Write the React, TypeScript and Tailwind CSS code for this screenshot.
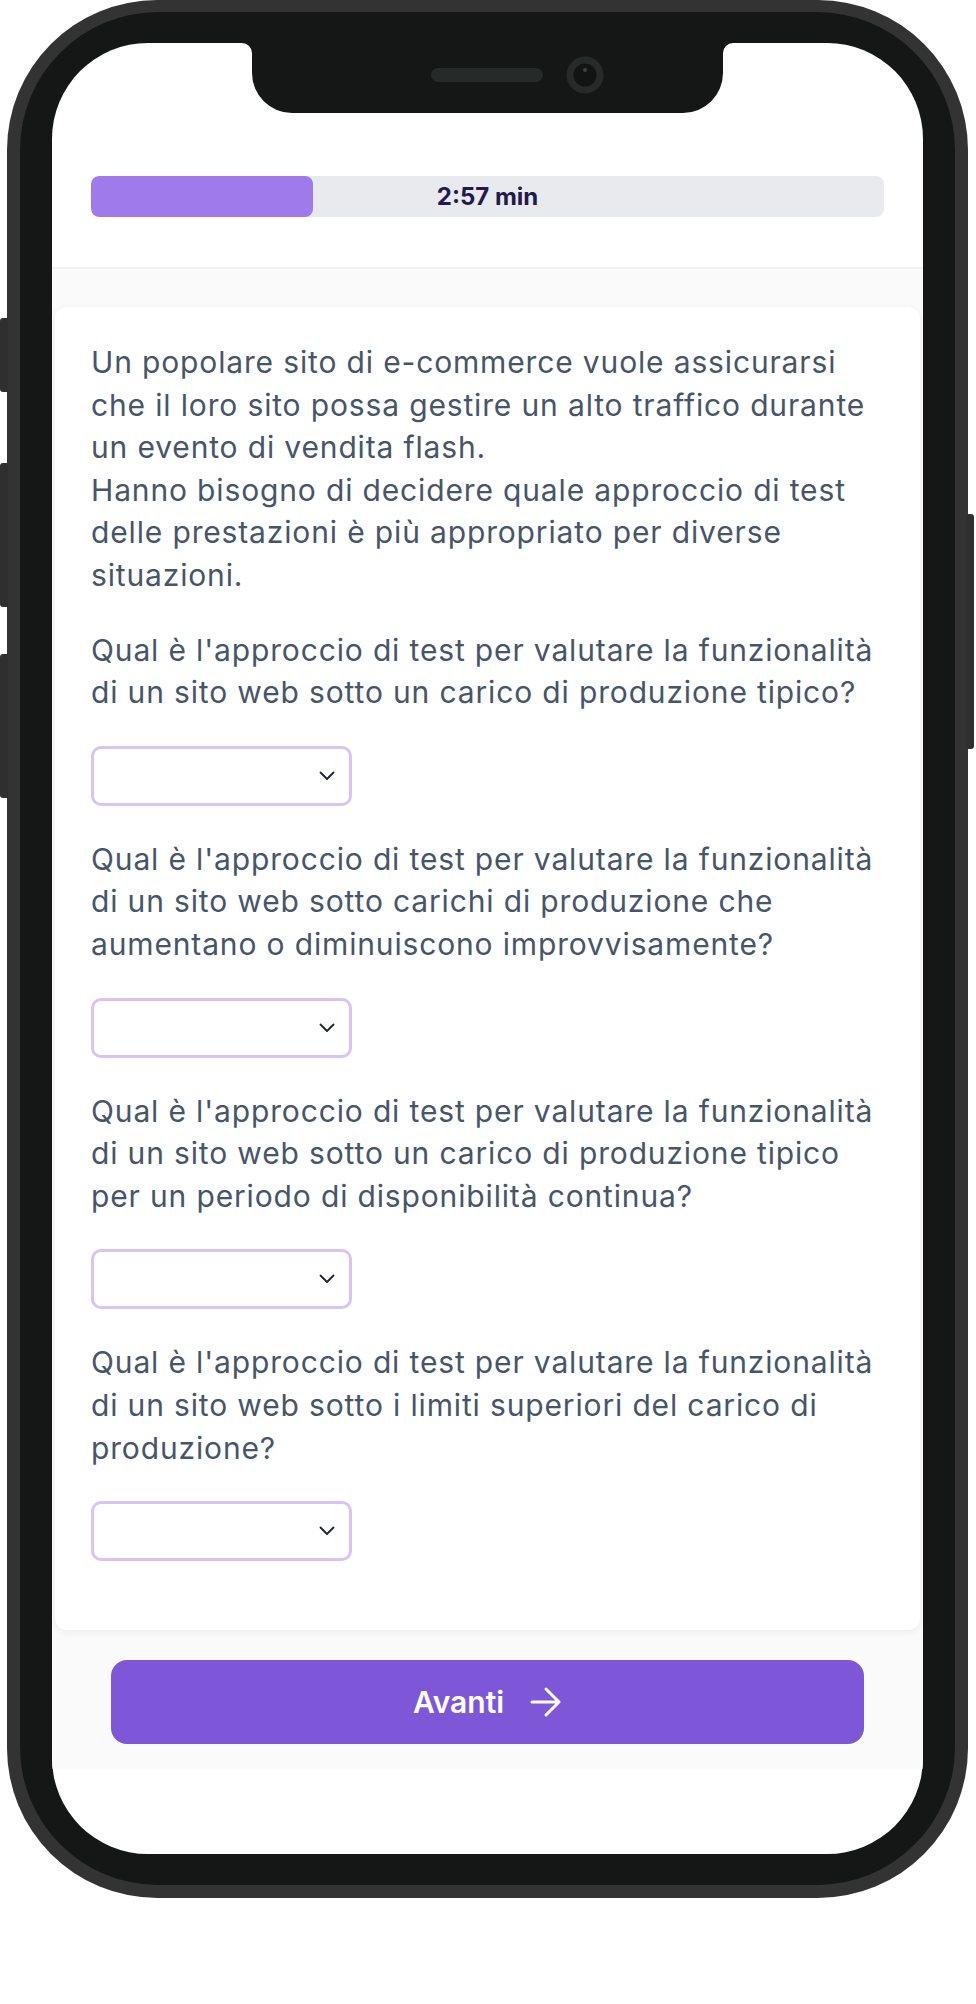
import React from "react";

const Chevron = () => (
  <svg width="16" height="10" viewBox="0 0 16 10" fill="none">
    <path d="M1.5 1.5 L8 8 L14.5 1.5" stroke="#1f2328" strokeWidth="1.8" strokeLinecap="round" strokeLinejoin="round" />
  </svg>
);

const SelectBox = () => (
  <div className="flex h-[60px] w-[261px] items-center justify-end rounded-[10px] border-[3px] border-[#d7c3f6] bg-white pr-[14px]">
    <Chevron />
  </div>
);

const Lines = ({ lines }: { lines: string[] }) => (
  <p className="whitespace-nowrap">
    {lines.map((l, i) => (
      <React.Fragment key={i}>
        {i > 0 && <br />}
        {l}
      </React.Fragment>
    ))}
  </p>
);

const Question = ({ lines }: { lines: string[] }) => (
  <>
    <Lines lines={lines} />
    <SelectBox />
  </>
);

export default function App() {
  return (
    <div className="relative h-[2004px] w-[976px] bg-white" style={{ fontFamily: "Inter, 'Noto Sans', sans-serif" }}>
      {/* side buttons */}
      <div className="absolute left-0 top-[318px] h-[74px] w-[8px] rounded-l-[3px] bg-[#2f2f2f]" />
      <div className="absolute left-0 top-[463px] h-[144px] w-[8px] rounded-l-[3px] bg-[#2f2f2f]" />
      <div className="absolute left-0 top-[654px] h-[144px] w-[8px] rounded-l-[3px] bg-[#2f2f2f]" />
      <div className="absolute left-[966px] top-[514px] h-[235px] w-[8px] rounded-r-[3px] bg-[#2f2f2f]" />

      {/* phone */}
      <div className="ml-[7px] h-[1898px] w-[961px] rounded-[150px] bg-[#333333] p-[13px] pt-[12px]">
        <div className="h-full w-full rounded-[138px] bg-[#151716] px-[32px] pb-[31px] pt-[31px]">
          <div className="relative flex h-full w-full flex-col overflow-hidden rounded-[96px] bg-white">
            {/* notch */}
            <svg className="absolute left-[190px] top-0" width="491" height="70" viewBox="0 0 491 70">
              <path
                d="M0 0 H491 A10 10 0 0 0 481 10 V30 A40 40 0 0 1 441 70 H50 A40 40 0 0 1 10 30 V10 A10 10 0 0 0 0 0 Z"
                fill="#151716"
              />
              <rect x="189" y="25" width="112" height="14" rx="7" fill="#262b2a" />
              <circle cx="343" cy="32" r="15" fill="#121413" stroke="#262b2a" strokeWidth="7" />
              <circle cx="343" cy="27" r="2" fill="#3b4241" />
            </svg>

            {/* header */}
            <div className="border-b-2 border-[#f1f1f4] px-[39px] pb-[50px] pt-[133px]">
              <div className="relative flex h-[41px] w-full items-center justify-center overflow-hidden rounded-[8px] bg-[#e9eaee]">
                <div className="absolute left-0 top-0 h-full w-[28%] rounded-[8px] bg-[#9f7aea]" />
                <span className="relative text-[24px] font-bold text-[#22194d]">2:57 min</span>
              </div>
            </div>

            {/* main */}
            <div className="bg-[#fafafa] px-[3px] pb-[25px] pt-[38px]">
              <div className="flex flex-col items-start gap-[32px] rounded-[12px] bg-white px-[36px] pb-[69px] pt-[34px] text-[30px] leading-[42.6px] tracking-[0.85px] text-[#475569] shadow-[0_2px_8px_rgba(0,0,0,0.06)]">
                <Lines
                  lines={[
                    "Un popolare sito di e-commerce vuole assicurarsi",
                    "che il loro sito possa gestire un alto traffico durante",
                    "un evento di vendita flash.",
                    "Hanno bisogno di decidere quale approccio di test",
                    "delle prestazioni è più appropriato per diverse",
                    "situazioni.",
                  ]}
                />
                <Question
                  lines={[
                    "Qual è l'approccio di test per valutare la funzionalità",
                    "di un sito web sotto un carico di produzione tipico?",
                  ]}
                />
                <Question
                  lines={[
                    "Qual è l'approccio di test per valutare la funzionalità",
                    "di un sito web sotto carichi di produzione che",
                    "aumentano o diminuiscono improvvisamente?",
                  ]}
                />
                <Question
                  lines={[
                    "Qual è l'approccio di test per valutare la funzionalità",
                    "di un sito web sotto un carico di produzione tipico",
                    "per un periodo di disponibilità continua?",
                  ]}
                />
                <Question
                  lines={[
                    "Qual è l'approccio di test per valutare la funzionalità",
                    "di un sito web sotto i limiti superiori del carico di",
                    "produzione?",
                  ]}
                />
              </div>

              <div className="px-[56px] pt-[30px]">
                <button className="flex h-[84px] w-full items-center justify-center gap-[26px] rounded-[16px] bg-[#7e57d8] text-[30px] font-semibold text-white">
                  <span>Avanti</span>
                  <svg width="32" height="32" viewBox="0 0 32 32" fill="none">
                    <path d="M2 16 H29 M16 3 L29 16 L16 29" stroke="white" strokeWidth="3" strokeLinecap="round" strokeLinejoin="round" />
                  </svg>
                </button>
              </div>
            </div>
          </div>
        </div>
      </div>
    </div>
  );
}
